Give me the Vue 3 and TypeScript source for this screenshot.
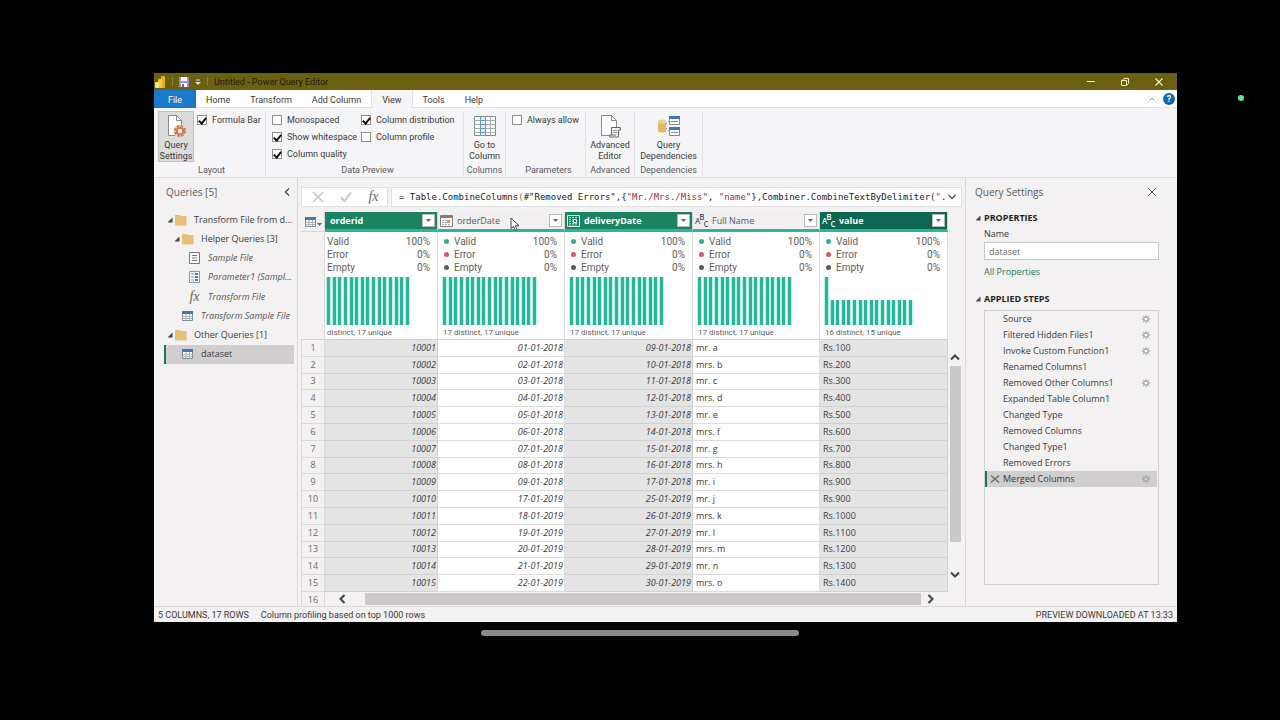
<script setup lang="ts">
import { ref } from 'vue'

interface Column {
  name: string
  kind: 'none' | 'date' | 'text'
  selected: boolean
  deep?: boolean
  dots: boolean
  numeric: boolean
  bars: number[]
  summary: string
}
interface TreeNode {
  label: string
  icon: 'folder' | 'list' | 'param' | 'fx' | 'table'
  level: number
  italic?: boolean
  selected?: boolean
}

const tabs = ['Home', 'Transform', 'Add Column', 'View', 'Tools', 'Help']

const formulaBar = ref(true)
const alwaysAllow = ref(false)
const preview = ref([
  { label: 'Monospaced', on: false },
  { label: 'Show whitespace', on: true },
  { label: 'Column quality', on: true },
  { label: 'Column distribution', on: true },
  { label: 'Column profile', on: false },
])

const tree: TreeNode[] = [
  { label: 'Transform File from d...', icon: 'folder', level: 0 },
  { label: 'Helper Queries [3]', icon: 'folder', level: 1 },
  { label: 'Sample File', icon: 'list', level: 2, italic: true },
  { label: 'Parameter1 (Sampl...', icon: 'param', level: 2, italic: true },
  { label: 'Transform File', icon: 'fx', level: 2, italic: true },
  { label: 'Transform Sample File', icon: 'table', level: 1, italic: true },
  { label: 'Other Queries [1]', icon: 'folder', level: 0 },
  { label: 'dataset', icon: 'table', level: 1, selected: true },
]

const full = (n: number): number[] => Array(n).fill(100)
const columns: Column[] = [
  { name: 'orderid', kind: 'none', selected: true, dots: false, numeric: true, bars: full(15), summary: 'distinct, 17 unique' },
  { name: 'orderDate', kind: 'date', selected: false, dots: true, numeric: true, bars: full(17), summary: '17 distinct, 17 unique' },
  { name: 'deliveryDate', kind: 'date', selected: true, dots: true, numeric: true, bars: full(17), summary: '17 distinct, 17 unique' },
  { name: 'Full Name', kind: 'text', selected: false, dots: true, numeric: false, bars: full(17), summary: '17 distinct, 17 unique' },
  { name: 'value', kind: 'text', selected: true, deep: true, dots: true, numeric: false, bars: [100, ...Array(15).fill(52)], summary: '16 distinct, 15 unique' },
]
const quality = [
  { label: 'Valid', value: '100%', tone: 'valid' },
  { label: 'Error', value: '0%', tone: 'error' },
  { label: 'Empty', value: '0%', tone: 'empty' },
]

const rows: string[][] = [
  ['10001', '01-01-2018', '09-01-2018', 'mr. a', 'Rs.100'],
  ['10002', '02-01-2018', '10-01-2018', 'mrs. b', 'Rs.200'],
  ['10003', '03-01-2018', '11-01-2018', 'mr. c', 'Rs.300'],
  ['10004', '04-01-2018', '12-01-2018', 'mrs. d', 'Rs.400'],
  ['10005', '05-01-2018', '13-01-2018', 'mr. e', 'Rs.500'],
  ['10006', '06-01-2018', '14-01-2018', 'mrs. f', 'Rs.600'],
  ['10007', '07-01-2018', '15-01-2018', 'mr. g', 'Rs.700'],
  ['10008', '08-01-2018', '16-01-2018', 'mrs. h', 'Rs.800'],
  ['10009', '09-01-2018', '17-01-2018', 'mr. i', 'Rs.900'],
  ['10010', '17-01-2019', '25-01-2019', 'mr. j', 'Rs.900'],
  ['10011', '18-01-2019', '26-01-2019', 'mrs. k', 'Rs.1000'],
  ['10012', '19-01-2019', '27-01-2019', 'mr. l', 'Rs.1100'],
  ['10013', '20-01-2019', '28-01-2019', 'mrs. m', 'Rs.1200'],
  ['10014', '21-01-2019', '29-01-2019', 'mr. n', 'Rs.1300'],
  ['10015', '22-01-2019', '30-01-2019', 'mrs. o', 'Rs.1400'],
]

const steps = [
  { label: 'Source', gear: true },
  { label: 'Filtered Hidden Files1', gear: true },
  { label: 'Invoke Custom Function1', gear: true },
  { label: 'Renamed Columns1', gear: false },
  { label: 'Removed Other Columns1', gear: true },
  { label: 'Expanded Table Column1', gear: false },
  { label: 'Changed Type', gear: false },
  { label: 'Removed Columns', gear: false },
  { label: 'Changed Type1', gear: false },
  { label: 'Removed Errors', gear: false },
  { label: 'Merged Columns', gear: true, selected: true },
]
const queryName = ref('dataset')
</script>

<template>
  <div class="screen">
    <i class="live-dot"></i>
    <main class="window">
      <header class="titlebar">
        <svg class="logo" width="12" height="12" viewBox="0 0 12 12">
          <rect x="7" y="0" width="4" height="12" rx="1" fill="#e8b21c" />
          <rect x="4" y="3" width="4" height="9" rx="1" fill="#f4cb3c" />
          <rect x="1" y="6" width="4" height="6" rx="1" fill="#fbe27c" />
        </svg>
        <i class="grip"></i>
        <button class="plain" aria-label="Save">
          <svg width="10" height="10" viewBox="0 0 10 10">
            <path d="M0 0h9l1 1v9H0z" fill="#a58bd0" />
            <path d="M2 0h6v4H2zM2 6h6v4H2z" fill="#fff" />
            <path d="M3 7h2v3H3z" fill="#7a5ca8" />
          </svg>
        </button>
        <button class="plain more" aria-label="Customize toolbar">
          <svg width="6" height="6" viewBox="0 0 6 6"><path d="M1 1h4" stroke="#e4dfb8" /><path d="M0 3h6L3 6z" fill="#e4dfb8" /></svg>
        </button>
        <i class="grip"></i>
        <span class="title">Untitled - Power Query Editor</span>
        <div class="controls">
          <button class="plain" aria-label="Minimize"><svg width="10" height="10" viewBox="0 0 10 10"><path d="M1 4.500h8" stroke="#f3eecb" /></svg></button>
          <button class="plain" aria-label="Restore"><svg width="10" height="10" viewBox="0 0 10 10" fill="none" stroke="#f3eecb"><path d="M1.500 3.500h5v5h-5z" /><path d="M3 3L4 1.500h4.500v5L7 8" /></svg></button>
          <button class="plain" aria-label="Close"><svg width="10" height="10" viewBox="0 0 10 10"><path d="M1.500 1.500l7 7M8.500 1.500l-7 7" stroke="#f3eecb" stroke-width="1.200" /></svg></button>
        </div>
      </header>

      <nav class="tabs">
        <button class="tab file">File</button>
        <button v-for="t in tabs" :key="t" class="tab" :class="{ active: t === 'View' }">{{ t }}</button>
        <div class="tabs-end">
          <svg width="8" height="6" viewBox="0 0 8 6"><path d="M1.500 4.500L4 2l2.500 2.500" fill="none" stroke="#8c8c8c" /></svg>
          <button class="help" aria-label="Help">?</button>
        </div>
      </nav>

      <section class="ribbon">
        <div class="group layout">
          <div class="tools">
            <button class="big pressed">
              <svg width="22" height="24" viewBox="0 0 22 24">
                <path d="M3.500 1.500h8l5 5v15h-13z" fill="#fff" stroke="#8a8a8a" />
                <path d="M11.500 1.500v5h5" fill="none" stroke="#8a8a8a" />
                <circle cx="15" cy="17" r="6.500" fill="#dcdcdc" />
                <circle cx="15" cy="17" r="5" fill="none" stroke="#d9753b" stroke-width="2" stroke-dasharray="2.600 1.327" />
                <circle cx="15" cy="17" r="3.200" fill="#fff" stroke="#d9753b" stroke-width="1.800" />
              </svg>
              <span>Query<br />Settings</span>
            </button>
            <div class="checks one"><label class="check"><input v-model="formulaBar" type="checkbox" />Formula Bar</label></div>
          </div>
          <div class="caption">Layout</div>
        </div>
        <div class="group preview">
          <div class="checks"><label v-for="c in preview" :key="c.label" class="check"><input v-model="c.on" type="checkbox" />{{ c.label }}</label></div>
          <div class="caption">Data Preview</div>
        </div>
        <div class="group columns">
          <button class="big">
            <svg width="22" height="24" viewBox="0 0 22 24">
              <path d="M.5 2.500h21v19H.5z" fill="#fff" stroke="#7f8a90" />
              <path d="M.5 6.500h21M.5 10.500h21M.5 14.500h21M.5 18.500h21M16.500 2.500v19M6.500 2.500v19" stroke="#a3acb0" fill="none" />
              <path d="M6.500 2.500h5v19h-5z" fill="#e4eff5" stroke="#6c98b2" />
              <path d="M6.500 6.500h5M6.500 10.500h5M6.500 14.500h5M6.500 18.500h5" stroke="#6c98b2" />
            </svg>
            <span>Go to<br />Column</span>
          </button>
          <div class="caption">Columns</div>
        </div>
        <div class="group params">
          <div class="checks one"><label class="check"><input v-model="alwaysAllow" type="checkbox" />Always allow</label></div>
          <div class="caption">Parameters</div>
        </div>
        <div class="group advanced">
          <button class="big">
            <svg width="22" height="24" viewBox="0 0 22 24">
              <path d="M2.500 1.500h10l5 5v15h-15z" fill="#fff" stroke="#8a8a8a" />
              <path d="M12.500 1.500v5h5" fill="none" stroke="#8a8a8a" />
              <path d="M12.500 21V13.500H21.500V16H19.500V23H10.500V21H17" fill="#f4f4f4" stroke="#666" />
              <path d="M14 16.500h4M14 18.500h4" stroke="#999" />
            </svg>
            <span>Advanced<br />Editor</span>
          </button>
          <div class="caption">Advanced</div>
        </div>
        <div class="group deps">
          <button class="big">
            <svg width="22" height="24" viewBox="0 0 22 24">
              <path d="M0 7v10c0 2 8 2 8 0V7z" fill="#e3b968" />
              <ellipse cx="4" cy="7.500" rx="4" ry="2" fill="#efcf8f" />
              <path d="M8 10l3-3M8 14l3 3" stroke="#888" stroke-dasharray="1.500 1" />
              <path d="M11.500 2.500h10v8h-10zM11.500 13.500h10v8h-10z" fill="#fff" stroke="#808a90" />
              <path d="M11 2h11v3H11zM11 13h11v3H11z" fill="#3f7cab" />
              <path d="M13 7.500h7M13 18.500h7" stroke="#808a90" />
            </svg>
            <span>Query<br />Dependencies</span>
          </button>
          <div class="caption">Dependencies</div>
        </div>
      </section>

      <div class="body">
        <aside class="queries">
          <div class="pane-head">
            <h2>Queries [5]</h2>
            <button class="plain" aria-label="Collapse"><svg width="8" height="10" viewBox="0 0 8 10"><path d="M6 1.500L2.500 5 6 8.500" fill="none" stroke="#555" stroke-width="1.500" /></svg></button>
          </div>
          <ul class="tree">
            <li v-for="n in tree" :key="n.label" :class="['level' + n.level, { selected: n.selected, italic: n.italic }]">
              <svg class="twist" width="6" height="6" viewBox="0 0 6 6"><path v-if="n.icon === 'folder'" d="M5.500 .5v5h-5z" fill="#444" /></svg>
              <svg v-if="n.icon === 'folder'" width="13" height="12" viewBox="0 0 13 12"><path d="M1 1h5l1 1h5.500v9.500H1z" fill="#e6bf78" /></svg>
              <svg v-else-if="n.icon === 'list'" width="13" height="12" viewBox="0 0 13 12"><path d="M1.500 .5h10v11h-10z" fill="#fff" stroke="#777" /><path d="M4 3.500h5M4 6h5M4 8.500h5" stroke="#777" /></svg>
              <svg v-else-if="n.icon === 'param'" width="13" height="12" viewBox="0 0 13 12"><path d="M1.500 .5h10v11h-10z" fill="#f4f8fb" stroke="#8296a4" /><path d="M3 3h3M3 6h3M3 9h3" stroke="#8296a4" /><path d="M7 2h3v2H7zM7 5h3v2H7zM7 8h3v2H7z" fill="#4c7ea3" /></svg>
              <span v-else-if="n.icon === 'fx'" class="fx">fx</span>
              <svg v-else width="13" height="12" viewBox="0 0 13 12"><path d="M1.500 1.500h10v9h-10z" fill="#fff" stroke="#7b8790" /><path d="M1 1h11v3H1z" fill="#4579a6" /><path d="M1.500 6.500h10M1.500 8.500h10M5 4v6.500M8.500 4v6.500" stroke="#a9b3ba" /></svg>
              <span class="label">{{ n.label }}</span>
            </li>
          </ul>
        </aside>

        <section class="center">
          <div class="formula-row">
            <div class="formula-actions">
              <button class="plain" aria-label="Cancel"><svg width="12" height="12" viewBox="0 0 12 12"><path d="M1 1l10 10M11 1L1 11" stroke="#c4c4c4" stroke-width="1.500" /></svg></button>
              <button class="plain" aria-label="Apply"><svg width="12" height="12" viewBox="0 0 12 12"><path d="M1 6.500L4.500 10 11 1.500" fill="none" stroke="#c4c4c4" stroke-width="2" /></svg></button>
              <button class="plain fx" aria-label="Add step">fx</button>
            </div>
            <div class="formula">
              <code>= Table.CombineColumns<b>(</b>#"Removed Errors",{<em>"Mr./Mrs./Miss"</em>, <em>"name"</em>},Combiner.CombineTextByDelimiter(<em>"</em>.</code>
              <button class="plain" aria-label="Expand"><svg width="10" height="8" viewBox="0 0 10 8"><path d="M1.500 2L5 5.500 8.500 2" fill="none" stroke="#555" stroke-width="1.500" /></svg></button>
            </div>
          </div>

          <div class="grid">
            <table>
              <thead>
                <tr class="names">
                  <th class="corner">
                    <svg width="17" height="12" viewBox="0 0 17 12"><path d="M.5 1.500h10v9H.5z" fill="#fff" stroke="#7b8790" /><path d="M0 1h11v3H0z" fill="#4579a6" /><path d="M.5 6.500h10M.5 8.500h10M4 4v6.500M7.500 4v6.500" stroke="#a9b3ba" /><path d="M12 7h5l-2.500 3z" fill="#666" /></svg>
                  </th>
                  <th v-for="c in columns" :key="c.name" :class="{ on: c.selected, deep: c.deep, bare: c.kind === 'none' }">
                    <svg v-if="c.kind === 'date' && !c.selected" class="kind" width="13" height="12" viewBox="0 0 13 12">
                      <path d="M.5 .5h12v11H.5z" fill="#fff" stroke="#857f7c" />
                      <path d="M.5 2h12" stroke="#857f7c" stroke-width="2" />
                      <path d="M2 5.500h9M2 7.500h9M2 9.500h9" stroke="#aaa5a2" stroke-dasharray="2 1" />
                      <path d="M7 5h3v3H7z" fill="#e29255" />
                    </svg>
                    <svg v-else-if="c.kind === 'date'" class="kind" width="13" height="12" viewBox="0 0 13 12">
                      <path d="M.5 .5h12v11H.5z" fill="none" stroke="#e3f5ee" />
                      <path d="M2 2.500h9M2 4.500h9M2 6.500h9M2 8.500h9M2 10h9" stroke="#b9e0d2" stroke-dasharray="2 1" />
                      <path d="M6.500 4.500h3v3h-3z" fill="#1b8262" stroke="#e3f5ee" />
                    </svg>
                    <span v-else-if="c.kind === 'text'" class="kind abc"><i>A</i><i>B</i><i>C</i></span>
                    <span class="col-name">{{ c.name }}</span>
                    <button class="drop" :aria-label="'Filter ' + c.name"><svg width="7" height="5" viewBox="0 0 7 5"><path d="M1 1h5L3.500 4z" fill="#666" /></svg></button>
                    <svg v-if="c.name === 'orderDate'" class="cursor" width="10" height="15" viewBox="0 0 10 15"><path d="M1 1v10.500l2.500-2 1.700 4 1.800-.8-1.700-3.900H9z" fill="#fff" stroke="#333" stroke-width=".9" /></svg>
                  </th>
                </tr>
                <tr class="profiles">
                  <td class="corner"></td>
                  <td v-for="c in columns" :key="c.name" :class="{ dotless: !c.dots }">
                    <div v-for="q in quality" :key="q.label" class="quality">
                      <i v-if="c.dots" :class="q.tone"></i><span>{{ q.label }}</span><span class="pct">{{ q.value }}</span>
                    </div>
                    <div class="bars" :class="'n' + c.bars.length"><i v-for="(b, i) in c.bars" :key="i" :style="{ height: b + '%' }"></i></div>
                    <div class="summary">{{ c.summary }}</div>
                  </td>
                </tr>
              </thead>
              <tbody>
                <tr v-for="(r, i) in rows" :key="i">
                  <th>{{ i + 1 }}</th>
                  <td v-for="(v, j) in r" :key="j" :class="{ on: columns[j].selected, numeric: columns[j].numeric }">{{ v }}</td>
                </tr>
              </tbody>
            </table>
            <div class="vscroll">
              <svg width="12" height="10" viewBox="0 0 12 10"><path d="M2 7.500L6 3.500l4 4" fill="none" stroke="#444" stroke-width="2" /></svg>
              <i></i>
              <svg width="12" height="10" viewBox="0 0 12 10"><path d="M2 2.500l4 4 4-4" fill="none" stroke="#444" stroke-width="2" /></svg>
            </div>
          </div>
          <div class="bottom">
            <span class="next">16</span>
            <div class="hscroll">
              <svg width="10" height="12" viewBox="0 0 10 12"><path d="M7.500 2l-4 4 4 4" fill="none" stroke="#444" stroke-width="2" /></svg>
              <i></i>
              <svg width="10" height="12" viewBox="0 0 10 12"><path d="M2.500 2l4 4-4 4" fill="none" stroke="#444" stroke-width="2" /></svg>
            </div>
          </div>
        </section>

        <aside class="settings">
          <div class="pane-head">
            <h2>Query Settings</h2>
            <button class="plain" aria-label="Close settings"><svg width="10" height="10" viewBox="0 0 10 10"><path d="M1 1l8 8M9 1L1 9" stroke="#666" /></svg></button>
          </div>
          <h3><svg width="6" height="6" viewBox="0 0 6 6"><path d="M5.500 .5v5h-5z" fill="#444" /></svg>PROPERTIES</h3>
          <div class="props">
            <label for="query-name">Name</label>
            <input id="query-name" v-model="queryName" type="text" />
            <a href="#">All Properties</a>
          </div>
          <h3><svg width="6" height="6" viewBox="0 0 6 6"><path d="M5.500 .5v5h-5z" fill="#444" /></svg>APPLIED STEPS</h3>
          <ol class="steps">
            <li v-for="s in steps" :key="s.label" :class="{ selected: s.selected }">
              <span class="del"><svg v-if="s.selected" width="10" height="10" viewBox="0 0 10 10"><path d="M1 1.500l8 7M9 1.500l-8 7" stroke="#666" stroke-width="1.300" /></svg></span>
              <span class="step">{{ s.label }}</span>
              <svg v-if="s.gear" width="10" height="10" viewBox="0 0 10 10" fill="none" stroke="#a3a1a2"><circle cx="5" cy="5" r="2.200" stroke-width="1.200" /><path d="M5 .5v2M5 7.500v2M.5 5h2M7.500 5h2M1.800 1.800l1.400 1.400M6.800 6.800l1.400 1.400M8.200 1.800L6.800 3.200M3.200 6.800L1.800 8.200" /></svg>
            </li>
          </ol>
        </aside>
      </div>

      <footer class="status">
        <span>5 COLUMNS, 17 ROWS</span>
        <span>Column profiling based on top 1000 rows</span>
        <span class="right">PREVIEW DOWNLOADED AT 13:33</span>
      </footer>
    </main>
    <i class="home-bar"></i>
  </div>
</template>

<style>
body { background: #000; }
</style>

<style scoped>
* { box-sizing: border-box; }
.screen {
  position: relative;
  display: flex;
  flex-direction: column;
  min-height: 100vh;
  padding: 73px 103px 84px 154px;
  background: #000;
  font-family: "Open Sans", "Noto Sans", sans-serif;
  font-size: 9px;
  line-height: 12px;
  color: #3b3a3b;
}
button, input { font: inherit; color: inherit; }
button { padding: 0; border: 0; background: none; }
svg { display: block; flex: none; }
h2, h3, ul, ol { margin: 0; padding: 0; list-style: none; }
.plain { display: flex; align-items: center; justify-content: center; }
.live-dot { position: absolute; top: 95px; right: 36px; width: 6px; height: 6px; border-radius: 50%; background: #5ce690; }
.home-bar { align-self: center; width: 318px; height: 6px; margin: 8px 51px 0 0; border-radius: 3px; background: #8a8a8a; }
.window { flex: 1; display: flex; flex-direction: column; background: #f3f1f2; }

.titlebar, .tabs, .ribbon, .status { font-family: Roboto, "Open Sans", sans-serif; }
.titlebar { display: flex; align-items: center; height: 17px; padding: 0 13px 0 0; gap: 6px; background: #6b5f10; color: #1f1c08; }
.grip { width: 1px; height: 9px; background: #8b8040; }
.title { flex: 1; }
.controls { display: flex; gap: 24px; }

.tabs { display: flex; height: 18px; background: #fff; border-bottom: 1px solid #e2e1e3; }
.tab { height: 18px; padding: 1px 10px 0; }
.tab.file { width: 42px; background: #1a79c8; color: #fff; }
.tab.active { background: #f5f5f8; border: solid #e2e1e3; border-width: 0 1px; }
.tabs-end { display: flex; align-items: center; gap: 7px; margin-left: auto; padding-right: 2px; }
.help { width: 12px; height: 12px; border-radius: 50%; background: #1467a8; color: #fff; font-weight: 700; line-height: 12px; }

.ribbon { display: flex; height: 70px; padding: 3px 0 1px; background: #f5f5f8; border-bottom: 1px solid #dcdbdd; }
.group { display: flex; flex-direction: column; justify-content: space-between; border-right: 1px solid #e2e1e4; }
.layout { width: 112px; padding-left: 4px; }
.preview { width: 198px; padding-left: 6px; }
.columns { width: 42px; }
.params { width: 80px; padding-left: 6px; }
.advanced { width: 49px; }
.deps { width: 68px; }
.tools { display: flex; gap: 3px; }
.caption { text-align: center; color: #5a595b; }
.big { display: flex; flex-direction: column; align-items: center; gap: 2px; width: 100%; padding: 3px 0 0; line-height: 11px; white-space: nowrap; }
.big.pressed { width: 36px; background: #dcdcdd; box-shadow: inset 0 0 0 1px #bfbec0; }
.checks { display: grid; grid-template-rows: repeat(3, 17px); grid-template-columns: 89px 1fr; grid-auto-flow: column; }
.checks.one { grid-template-columns: 1fr; }
.check { display: flex; align-items: center; gap: 5px; white-space: nowrap; }
.check input { appearance: none; position: relative; width: 10px; height: 10px; margin: 0; border: 1px solid #8f8e90; background: #fff; }
.check input:checked::after { content: ""; position: absolute; left: 2px; top: 0; width: 3px; height: 6px; border: solid #111; border-width: 0 2px 2px 0; transform: rotate(40deg); }

.body { flex: 1; display: flex; }
.pane-head { display: flex; align-items: center; justify-content: space-between; height: 28px; }
h2 { font-size: 10px; font-weight: 400; color: #5c5b5c; }
.queries { width: 144px; border-right: 1px solid #dad8d9; }
.queries .pane-head { padding: 0 6px 0 12px; }
.tree { display: grid; grid-template-columns: minmax(0, 1fr); grid-auto-rows: 1fr; height: 154px; margin: 4px 3px 0 10px; }
.tree li { display: flex; align-items: center; white-space: nowrap; border-left: 2px solid transparent; }
.tree .twist { margin: 0 1px; }
.tree .label { margin-left: 7px; }
.tree .level1 { padding-left: 7px; }
.tree .level2 { padding-left: 14px; }
.tree .italic .label { font-style: italic; color: #565556; }
.tree .selected { background: #d0cecf; border-left-color: #17795a; }
.fx { width: 13px; text-align: center; font-family: "Liberation Serif", serif; font-style: italic; font-size: 14px; color: #666; }

.center { flex: 1; min-width: 0; display: flex; flex-direction: column; padding: 9px 0 0 3px; }
.formula-row { display: flex; gap: 3px; height: 20px; margin: 0 3px 5px 0; }
.formula-actions { display: flex; align-items: center; justify-content: space-between; width: 87px; padding: 0 7px 0 10px; background: #fff; border: 1px solid #e1dfe0; }
.formula { flex: 1; min-width: 0; display: flex; align-items: center; justify-content: space-between; padding: 0 4px 0 7px; background: #fff; border: 1px solid #e1dfe0; }
code { overflow: hidden; font-family: "DejaVu Sans Mono", monospace; font-size: 9px; color: #222; white-space: pre; }
code em { font-style: normal; color: #a3283c; }
code b { font-weight: 400; color: #8a7a10; }

.grid { flex: 1; display: flex; }
table { flex: 1; display: flex; flex-direction: column; }
thead { display: block; }
tbody { flex: 1; display: grid; grid-auto-rows: 1fr; }
tr { display: grid; grid-template-columns: 24px 113fr 127fr 128fr 127fr 128fr; }
.names { height: 20px; }
.names th { position: relative; display: flex; align-items: center; height: 20px; padding: 0 2px 0 0; border-right: 1px solid #d6d4d5; border-bottom: 3px solid #2bb59a; background: #f1efef; font-weight: 400; color: #5a595a; text-align: left; }
.names th.corner { border-bottom: 1px solid #d6d4d5; padding-left: 4px; background: #f3f1f2; }
.names .on { background: #1b8262; color: #fff; font-weight: 700; }
.names .deep { background: #0f6650; }
.kind { margin-left: 2px; flex: none; }
.abc { display: flex; width: 13px; margin-top: 3px; font-size: 8px; line-height: 8px; font-weight: 600; }
.abc i { font-style: normal; margin-right: -1px; }
.abc i:nth-child(2) { margin-top: -4px; }
.abc i:nth-child(3) { margin-top: 3px; }
.col-name { flex: 1; margin-left: 4px; }
.bare .col-name { margin-left: 5px; }
.drop { display: flex; align-items: center; justify-content: center; width: 13px; height: 13px; background: #fff; border: 1px solid #b9b7b8; }
.cursor { position: absolute; left: 72px; top: 5px; z-index: 1; }
.profiles { height: 108px; }
.profiles td { padding: 3px 7px 0 5px; border-right: 1px solid #dddbdc; border-bottom: 1px solid #d2d0d1; background: #fff; font-family: Roboto, sans-serif; font-size: 10px; color: #5f5e60; }
.profiles td.corner { background: #f3f1f2; }
.profiles td.dotless { padding-left: 2px; }
.quality { display: flex; align-items: center; height: 13px; }
.quality i { width: 5px; height: 5px; margin: 0 5px 0 1px; border-radius: 50%; }
.valid { background: #2fae8c; }
.error { background: #cf5a6e; }
.empty { background: #5b5a5c; }
.pct { margin-left: auto; }
.bars { display: flex; align-items: flex-end; justify-content: space-between; height: 48px; margin-top: 3px; }
.bars i { width: 3px; background: #2cb49b; box-shadow: 1px 0 #b9f3e6, -1px 0 #b9f3e6; }
.n15 { width: 82px; }
.n17 { width: 93px; }
.n16 { width: 87px; }
.summary { margin-top: 2px; font-family: Roboto, sans-serif; font-size: 8px; white-space: nowrap; }
tbody th { display: flex; align-items: center; justify-content: center; border: solid #dbd9da; border-width: 0 1px 1px; background: #f3f1f2; font-weight: 400; color: #6a696a; }
tbody td { display: flex; align-items: center; padding: 0 1px 0 3px; border-right: 1px solid #dddbdc; border-bottom: 1px solid #dddbdc; background: #fff; }
tbody td.on { background: #e4e4e5; border-color: #d2d1d2; }
tbody td.numeric { justify-content: flex-end; font-style: italic; }
.vscroll { display: flex; flex-direction: column; align-items: center; width: 17px; padding: 140px 3px 12px 0; }
.vscroll i { width: 11px; flex: 1; margin: 4px 0 28px; background: #cbc9cb; }
.bottom { display: flex; height: 14px; overflow: hidden; }
.next { width: 24px; padding-top: 2px; text-align: center; color: #6a696a; border: solid #dbd9da; border-width: 0 1px; }
.hscroll { flex: 1; display: flex; align-items: center; height: 13px; padding: 0 29px 0 12px; }
.hscroll i { flex: 1; height: 12px; margin: 0 5px 0 18px; background: #cbc9cb; }

.settings { width: 212px; padding: 0 18px 0 9px; border-left: 1px solid #dad8d9; }
.settings .pane-head { margin-right: 2px; }
h3 { display: flex; align-items: center; gap: 3px; height: 16px; margin-top: 4px; font-size: 9px; font-weight: 700; color: #222; }
.props { display: flex; flex-direction: column; align-items: flex-start; margin: 2px 0 13px 9px; }
.props input { width: 100%; height: 18px; margin: 2px 0 6px; padding: 0 4px; border: 1px solid #c8c6c7; background: #fff; color: #666; }
.props a { color: #1b7a56; text-decoration: none; }
.steps { height: 275px; margin: 3px 0 0 9px; border: 1px solid #d2d0d1; }
.steps li { display: flex; align-items: center; height: 16px; padding-right: 6px; border-left: 2px solid transparent; margin-right: 1px; }
.steps .selected { background: #d0cecf; border-left-color: #17795a; }
.del { width: 16px; padding-left: 3px; }
.step { flex: 1; }

.status { display: flex; align-items: center; gap: 12px; height: 16px; padding: 0 4px; border-top: 1px solid #dad8d9; white-space: nowrap; }
.status .right { margin-left: auto; }
</style>
